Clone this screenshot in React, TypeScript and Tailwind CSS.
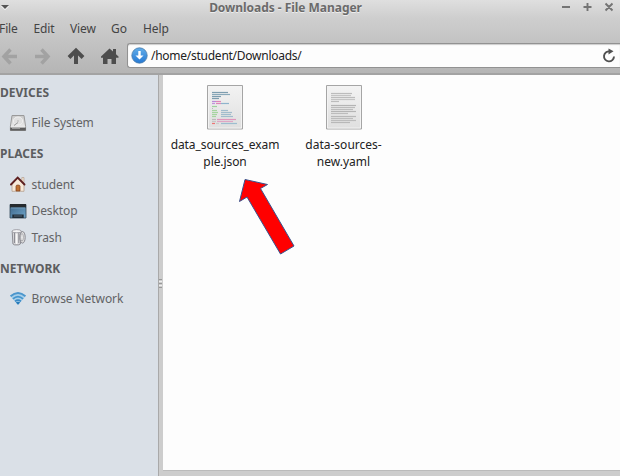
import type { ReactNode } from 'react';

const DriveIcon = () => (
  <svg width="18" height="18" viewBox="0 0 18 18" className="shrink-0">
    <defs>
      <linearGradient id="drive" x1="0" y1="0" x2="0" y2="1">
        <stop offset="0" stopColor="#c9c9c9" />
        <stop offset="1" stopColor="#f4f4f4" />
      </linearGradient>
    </defs>
    <path d="M3 1.5h12l1.600 10.800v4.200H1.400v-4.200z" fill="url(#drive)" stroke="#9a9a9a" strokeWidth="1" />
    <path d="M1.200 13.600h15.600v3H1.200z" fill="#5e5e5e" />
    <path d="M3 14.500h8" stroke="#999" />
    <ellipse cx="9" cy="7" rx="4.700" ry="4" fill="#e0e0e0" stroke="#f0f0f0" />
    <path d="M5 11.500l4-3" stroke="#999" />
    <circle cx="9" cy="7" r="1" fill="#c4c4c4" />
  </svg>
);

const HouseIcon = () => (
  <svg width="18" height="18" viewBox="0 0 18 18" className="shrink-0">
    <path d="M12.800 2.500h2.200v5h-2.200z" fill="#f0e0cc" stroke="#a58a78" strokeWidth=".5" />
    <path d="M3 9l6-6 6 6v7.300H3z" fill="#f8ead9" stroke="#b5a08e" strokeWidth=".8" />
    <path d="M2 9.500L8.700 2.500l6.800 7" fill="none" stroke="#5e2020" strokeWidth="1.900" strokeLinecap="round" />
    <path d="M7 11.200q0-1.200 2-1.200t2 1.200v4.800H7z" fill="#c07030" stroke="#7c3e1c" strokeWidth=".7" />
  </svg>
);

const DesktopIcon = () => (
  <svg width="18" height="18" viewBox="0 0 18 18" className="shrink-0">
    <defs>
      <linearGradient id="desk" x1="0" y1="0" x2="1" y2="1">
        <stop offset="0" stopColor="#3d6589" />
        <stop offset="1" stopColor="#6fa5c9" />
      </linearGradient>
    </defs>
    <path d="M1 2.500h16V16H1z" fill="url(#desk)" stroke="#34495b" strokeWidth=".8" />
    <path d="M1 2h16v3.500H1z" fill="#252a2e" />
    <path d="M3.300 12.500h11.400V16H3.300z" fill="#202d38" />
    <path d="M5 14h8" stroke="#506575" />
    <path d="M2 6h14" stroke="#7ba5c1" strokeWidth=".8" />
  </svg>
);

const TrashIcon = () => (
  <svg width="18" height="18" viewBox="0 0 18 18" className="shrink-0">
    <path d="M3.200 3.200h9L11.400 16l-2 .9H5.600l-1.700-1z" fill="#d5d5d8" stroke="#86868c" strokeWidth=".9" />
    <path d="M5.500 5v10M9.800 5v10" stroke="#8d8d94" strokeWidth="1" />
    <path d="M7.600 5v11" stroke="#f8f8f8" strokeWidth="1.500" />
    <ellipse cx="7.700" cy="3.200" rx="4.600" ry="1.600" fill="#f4f4f5" stroke="#909098" strokeWidth=".8" />
    <ellipse cx="13.500" cy="9.300" rx="2.700" ry="5.800" fill="#ddd" stroke="#808088" strokeWidth=".9" />
    <ellipse cx="13" cy="9.300" rx="1.300" ry="3.800" fill="#f5f5f5" stroke="#8c8c92" strokeWidth=".7" />
  </svg>
);

const WifiIcon = () => (
  <svg width="18" height="18" viewBox="0 0 18 18" className="shrink-0" fill="none">
    <path d="M1 6.800q8-7.300 16 0L9 16z" fill="#a8cfe9" />
    <path d="M1.600 7.300q7.400-6.600 14.800 0" strokeWidth="1.900" stroke="#4c96cc" />
    <path d="M3.900 9.900q5.100-4.500 10.200 0" strokeWidth="1.800" stroke="#4595cd" />
    <path d="M6 12.300q3-2.500 6 0" strokeWidth="1.700" stroke="#3b8ac6" />
    <path d="M9 15.800l-2.200-2.300q2.200-1.700 4.400 0z" fill="#287bb9" />
  </svg>
);

function Place({ icon, label, width }: { icon: ReactNode; label: string; width: string }) {
  return (
    <div className="flex h-[26.5px] items-center gap-[4.500px] pl-[9px] tracking-[-0.08px] text-[#626365]">
      {icon}
      <span className={`${width} whitespace-nowrap`}>{label}</span>
    </div>
  );
}

const heading = 'flex items-center font-bold text-[#5c5d5f]';

type Bar = [number, number, number, string];

const jsonBars: Bar[] = [
  [5, 7, 16, '#7d9daf'], [5, 9, 18, '#8aa9ba'], [5, 11, 9, '#7d9daf'], [5, 13, 7, '#7d9daf'],
  [5, 16, 4, '#b98ad8'], [9, 16, 5, '#df87b8'], [5, 18, 3, '#c293dc'], [9, 18, 5, '#df87b8'], [14, 18, 8, '#8fb4cc'],
  [5, 21, 5, '#9dd29c'], [5, 23, 1, '#bbb'], [5, 25, 5, '#a5d59f'], [14, 25, 7, '#a1bccd'],
  [5, 27, 6, '#a5d59f'], [14, 27, 11, '#a1bccd'], [5, 29, 5, '#a5d59f'], [14, 29, 10, '#a1bccd'],
  [5, 31, 4, '#a5d59f'], [14, 31, 12, '#a1bccd'], [5, 34, 4, '#bbb'], [10, 34, 19, '#e096bc'],
  [5, 36, 4, '#c6c6c6'], [10, 36, 16, '#e0a6c4'], [5, 38, 3, '#ed7575'], [9, 38, 3, '#ccc'], [14, 38, 16, '#9dbdcf'],
];

const textBars: Bar[] = [
  [5, 8, 21, '#bcbcbc'], [5, 10, 20, '#c4c4c4'], [5, 12, 24, '#bcbcbc'], [5, 14, 24, '#c4c4c4'], [5, 16, 8, '#bcbcbc'],
  [5, 20, 25, '#b4b4b4'], [5, 22, 24, '#bcbcbc'], [5, 24, 22, '#bcbcbc'], [5, 26, 25, '#b4b4b4'], [5, 28, 17, '#bcbcbc'],
  [5, 31, 25, '#b8b8b8'], [5, 33, 22, '#bcbcbc'], [5, 35, 25, '#bcbcbc'], [5, 37, 19, '#b8b8b8'],
];

function Page({ bars }: { bars: Bar[] }) {
  return (
    <svg width="36" height="45" viewBox="0 0 36 45" className="shrink-0">
      <defs>
        <linearGradient id="page" x1="0" y1="0" x2="0" y2="1">
          <stop offset="0" stopColor="#f3f3f3" />
          <stop offset="1" stopColor="#dfdfdf" />
        </linearGradient>
      </defs>
      <path d="M.5.5h35v43.500H.5z" fill="url(#page)" stroke="#a5a5a5" />
      <path d="M1.500 1.500h33v41.500h-33z" fill="none" stroke="#f3f3f3" />
      {bars.map(([x, y, w, c], i) => (
        <path key={i} d={`M${x} ${y + 0.5}h${w}`} stroke={c} strokeWidth="1.2" />
      ))}
    </svg>
  );
}

const dark = '#4d4d4d';

export default function App() {
  return (
    <div className="relative flex h-[476px] w-[620px] flex-col overflow-hidden bg-[#cdcdcd] font-['Noto_Sans',sans-serif] text-[12px] leading-[17px]">
      <header className="flex h-[75px] shrink-0 flex-col border-b-2 border-[#a3a3a3] bg-linear-to-b from-[#dfdfdf] via-[#cecece] via-25% to-[#b5b5b5]">
        <div className="flex h-[18px] items-start justify-between">
          <svg width="12" height="18" viewBox="0 0 12 18">
            <path d="M1 6h8L5 10z" fill="#fff" />
            <path d="M1 5h8L5 9z" fill="#555" />
          </svg>
          <h1 className="-mt-px ml-[-1px] font-bold tracking-[-0.04px] whitespace-nowrap text-[#6a6a6a] [text-shadow:0_1px_0_#eee]">Downloads - File Manager</h1>
          <svg width="60" height="18" viewBox="0 0 60 18" fill="none" stroke="#747474" strokeWidth="1.900">
            <path d="M2 7h8M23.500 7h8M27.500 3v8M45.500 3.500l7 7M52.500 3.500l-7 7" />
          </svg>
        </div>
        <nav className="-mt-px mb-px flex h-[22px] items-center tracking-[-0.1px] text-[#444]">
          <span className="-ml-px w-[34.500px]">File</span>
          <span className="w-[36.500px]">Edit</span>
          <span className="w-[41px]">View</span>
          <span className="w-[32px]">Go</span>
          <span>Help</span>
        </nav>
        <div className="flex h-[33px] items-start pt-[3px]">
          <svg width="127" height="26" viewBox="0 0 127 26" fill="none" className="shrink-0">
            <path d="M17 13.500H5M10.500 6.500l-6.500 7 6.500 7" stroke="#a2a2a2" strokeWidth="3.500" />
            <path d="M35 13.500h12M41.500 6.500l6.500 7-6.500 7" stroke="#a2a2a2" strokeWidth="3.500" />
            <path d="M76 21V9M69 14.500l7-7 7 7" stroke={dark} strokeWidth="4" />
            <path d="M101 13.500l8.500-8 3.500 3V6h3v5.200l2.500 2.300v1.200H116V21h-4.500v-5h-4v5H103v-6.300h-2z" fill={dark} />
          </svg>
          <div className="flex h-[25px] flex-1 items-center rounded-l-[3px] border border-r-0 border-[#929292] bg-[#fdfdfd] pl-[3px] text-[#222] shadow-[inset_0_1px_1px_#ccc]">
            <svg width="17" height="17" viewBox="0 0 17 17" className="mr-[3px] shrink-0">
              <defs>
                <linearGradient id="down" x1="0" y1="0" x2="0" y2="1">
                  <stop offset="0" stopColor="#63aee9" />
                  <stop offset="1" stopColor="#2478d4" />
                </linearGradient>
              </defs>
              <circle cx="8.500" cy="8.500" r="7.700" fill="url(#down)" stroke="#4a7ba8" strokeWidth=".8" />
              <path d="M7.300 4h2.400v4.500h2.800L8.500 12.500l-4-4h2.800z" fill="#fff" />
            </svg>
            <span className="tracking-[-0.26px]">/home/student/Downloads/</span>
            <svg width="16" height="16" viewBox="0 0 16 16" className="mr-[3px] ml-auto">
              <path d="M9 3.500A5 5 0 1 0 13 8.500" fill="none" stroke="#505050" strokeWidth="1.900" />
              <path d="M7.500.5L12.500 3.200 7.500 6.500z" fill="#505050" />
            </svg>
          </div>
        </div>
      </header>

      <div className="flex min-h-0 flex-1">
        <aside className="flex w-[158px] shrink-0 flex-col bg-[#dae0e7]">
          <h2 className={`${heading} mt-[8px] h-[19px]`}>DEVICES</h2>
          <div className="mt-[7.500px]">
            <Place icon={<DriveIcon />} label="File System" width="w-[64px]" />
          </div>
          <h2 className={`${heading} mt-[8px] h-[19px]`}>PLACES</h2>
          <div className="mt-[8px] flex flex-col">
            <Place icon={<HouseIcon />} label="student" width="w-[44px]" />
            <Place icon={<DesktopIcon />} label="Desktop" width="w-[48px]" />
            <Place icon={<TrashIcon />} label="Trash" width="w-[34px]" />
          </div>
          <h2 className={`${heading} mt-[8px] h-[19px]`}>NETWORK</h2>
          <div className="mt-[7.500px]">
            <Place icon={<WifiIcon />} label="Browse Network" width="w-[95px]" />
          </div>
        </aside>
        <div className="flex w-[5px] shrink-0 flex-col gap-px border-l border-[#a9a9a9] bg-[#cdcdcd] pt-[204px]">
          <i className="h-px w-[3px] bg-[#999]" />
          <i className="h-px w-[3px] bg-[#eee]" />
          <i className="h-px w-[3px] bg-[#999]" />
          <i className="h-px w-[3px] bg-[#eee]" />
          <i className="h-px w-[3px] bg-[#999]" />
        </div>
        <main className="mb-[5px] flex flex-1 items-start border-b border-[#bbb] bg-[#fdfdfd] pt-[10px] text-[#222]">
          <div className="flex w-[124px] flex-col items-center text-center">
            <Page bars={jsonBars} />
            <p className="mt-[6px] tracking-[-0.08px] whitespace-nowrap">data_sources_exam<br />ple.json</p>
          </div>
          <div className="flex w-[113px] flex-col items-center text-center">
            <Page bars={textBars} />
            <p className="mt-[6px] whitespace-nowrap">data-sources-<br />new.yaml</p>
          </div>
        </main>
      </div>

      <svg width="58" height="82" viewBox="0 0 58 82" className="absolute top-[176px] left-[238px]">
        <path d="M7 3.500L29.500 8.500 22.500 12.500 56 70 42.500 78 9 21 1.500 25.500z" fill="#f00" stroke="#365590" />
      </svg>
    </div>
  );
}
